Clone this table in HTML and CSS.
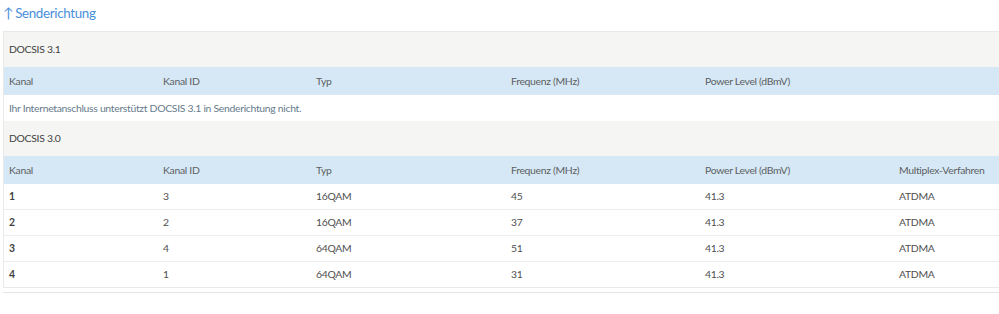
FILE: index.html
```html
<!DOCTYPE html>
<html lang="de">
<head>
<meta charset="utf-8">
<link rel="stylesheet" href="styles.css">
</head>
<body>
<h3 class="title"><span class="arrow">↑</span><span>Senderichtung</span></h3>
<div class="box">
  <div class="section">DOCSIS 3.1</div>
  <div class="row head">
    <div>Kanal</div><div>Kanal ID</div><div>Typ</div><div>Frequenz (MHz)</div><div>Power Level (dBmV)</div><div></div>
  </div>
  <div class="msg">Ihr Internetanschluss unterstützt DOCSIS 3.1 in Senderichtung nicht.</div>
  <div class="section">DOCSIS 3.0</div>
  <div class="row head">
    <div>Kanal</div><div>Kanal ID</div><div>Typ</div><div>Frequenz (MHz)</div><div>Power Level (dBmV)</div><div>Multiplex-Verfahren</div>
  </div>
  <div class="row data">
    <div class="k">1</div><div>3</div><div>16QAM</div><div>45</div><div>41.3</div><div>ATDMA</div>
  </div>
  <div class="row data">
    <div class="k">2</div><div>2</div><div>16QAM</div><div>37</div><div>41.3</div><div>ATDMA</div>
  </div>
  <div class="row data">
    <div class="k">3</div><div>4</div><div>64QAM</div><div>51</div><div>41.3</div><div>ATDMA</div>
  </div>
  <div class="row data">
    <div class="k">4</div><div>1</div><div>64QAM</div><div>31</div><div>41.3</div><div>ATDMA</div>
  </div>
</div>
<div class="next"></div>
</body>
</html>
```

FILE: styles.css
```css
html { overflow: hidden; }
body {
  margin: 0;
  padding: 0 0 0 3px;
  font-family: Lato, "Open Sans", sans-serif;
  font-size: 10.4px;
  letter-spacing: -0.3px;
  color: #4f4f4f;
  background: #fff;
  width: 1040px;
}
.title {
  margin: 0;
  height: 31px;
  padding: 5px 0 0 0;
  box-sizing: border-box;
  display: flex;
  gap: 2px;
  align-items: baseline;
  font-weight: 400;
  font-size: 13.4px;
  letter-spacing: -0.35px;
  line-height: 16px;
  color: #4a8fdb;
}
.arrow { font-size: 14px; }
.box {
  border: 1px solid #e9e9e9;
  border-right: 0;
}
.section {
  height: 35px;
  line-height: 35px;
  padding-left: 5px;
  background: #f5f5f3;
  color: #3f3f3f;
}
.row {
  display: grid;
  grid-template-columns: 154px 153px 195px 194px 194px 1fr;
}
.row > div { padding-left: 5px; }
.head {
  background: #d6e8f6;
  height: 28px;
  line-height: 28px;
  color: #5c5f62;
}
.msg {
  height: 26px;
  line-height: 26px;
  padding-left: 5px;
  color: #667b8b;
}
.data {
  height: 25px;
  line-height: 25px;
  border-bottom: 1px solid #ececec;
  color: #4f4f4f;
}
.data:last-child { border-bottom: 0; }
.data .k { font-weight: 700; color: #3f3f3f; }
.next {
  margin-top: 4px;
  border-top: 1px solid #e4e4e4;
}
```
